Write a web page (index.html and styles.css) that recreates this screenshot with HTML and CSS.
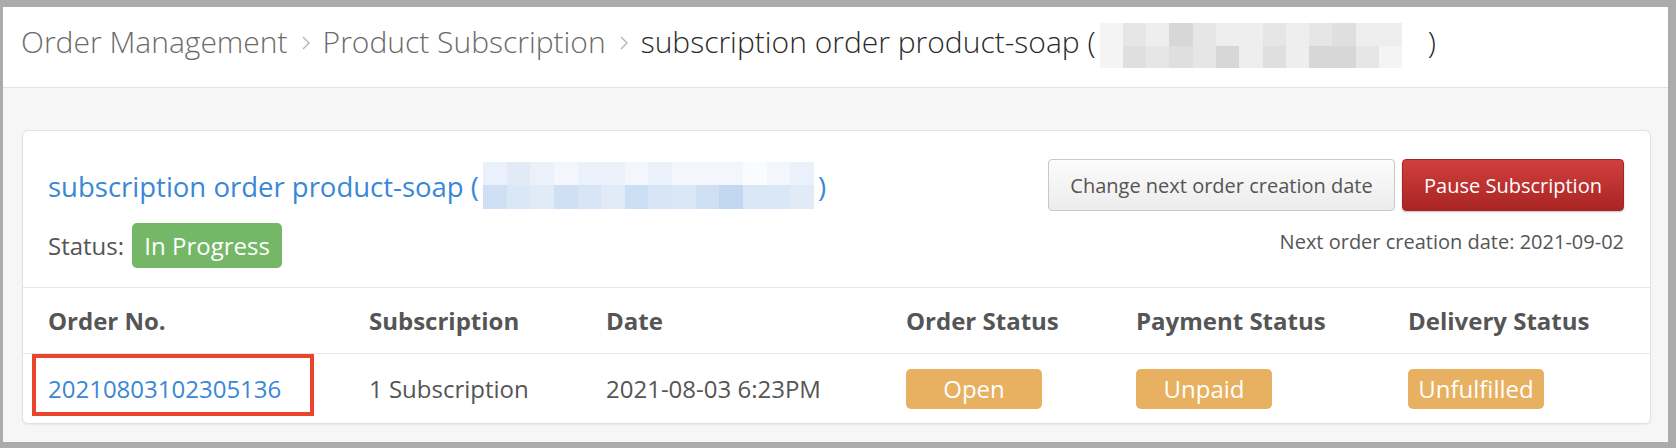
FILE: index.html
```html
<!DOCTYPE html>
<html lang="en">
<head>
<meta charset="utf-8">
<title>Subscription order</title>
<link rel="stylesheet" href="styles.css">
</head>
<body>
<div class="frame">
  <div class="page">
    <header class="topbar">
      <span class="crumb">Order Management</span>
      <svg class="chev" width="10" height="16" viewBox="0 0 10 16"><polyline points="2,2 8,8 2,14" fill="none" stroke="#aeb6c2" stroke-width="1.4"/></svg>
      <span class="crumb">Product Subscription</span>
      <svg class="chev" width="10" height="16" viewBox="0 0 10 16"><polyline points="2,2 8,8 2,14" fill="none" stroke="#aeb6c2" stroke-width="1.4"/></svg>
      <span class="crumb current">subscription order product-soap (</span>
      <span class="mosaic mosaic-gray">
        <i class="g1"></i><i class="g3"></i><i class="g2"></i><i class="g5"></i><i class="g3"></i><i class="g2"></i><i class="g2"></i><i class="g3"></i><i class="g2"></i><i class="g3"></i><i class="g4"></i><i class="g2"></i><i class="g2"></i><i class="g0"></i>
        <i class="g1"></i><i class="g4"></i><i class="g3"></i><i class="g4"></i><i class="g3"></i><i class="g5"></i><i class="g2"></i><i class="g4"></i><i class="g2"></i><i class="g5"></i><i class="g5"></i><i class="g3"></i><i class="g1"></i><i class="g0"></i>
      </span>
      <span class="crumb current">)</span>
    </header>

    <main class="content">
      <section class="card">
        <div class="card-head">
          <div class="head-left">
            <h1 class="title">
              <span>subscription order product-soap (</span>
              <span class="mosaic mosaic-blue">
                <i class="b2"></i><i class="b3"></i><i class="b2"></i><i class="b1"></i><i class="b2"></i><i class="b2"></i><i class="b1"></i><i class="b2"></i><i class="b1"></i><i class="b1"></i><i class="b1"></i><i class="b0"></i><i class="b1"></i><i class="b2"></i>
                <i class="b6"></i><i class="b4"></i><i class="b3"></i><i class="b6"></i><i class="b5"></i><i class="b3"></i><i class="b7"></i><i class="b5"></i><i class="b4"></i><i class="b6"></i><i class="b8"></i><i class="b4"></i><i class="b4"></i><i class="b3"></i>
              </span>
              <span>)</span>
            </h1>
            <div class="status-row">
              <span class="status-label">Status:</span>
              <span class="badge badge-green">In Progress</span>
            </div>
          </div>
          <div class="head-right">
            <div class="actions">
              <button class="btn btn-default">Change next order creation date</button>
              <button class="btn btn-danger">Pause Subscription</button>
            </div>
            <div class="next-date">Next order creation date: 2021-09-02</div>
          </div>
        </div>

        <div class="table">
          <div class="row thead">
            <div class="cell">Order No.</div>
            <div class="cell">Subscription</div>
            <div class="cell">Date</div>
            <div class="cell">Order Status</div>
            <div class="cell">Payment Status</div>
            <div class="cell">Delivery Status</div>
          </div>
          <div class="row tbody">
            <div class="cell order-cell">
              <a class="order-link" href="#">20210803102305136</a>
              <span class="highlight"></span>
            </div>
            <div class="cell">1 Subscription</div>
            <div class="cell">2021-08-03 6:23PM</div>
            <div class="cell"><span class="badge badge-orange">Open</span></div>
            <div class="cell"><span class="badge badge-orange">Unpaid</span></div>
            <div class="cell"><span class="badge badge-orange">Unfulfilled</span></div>
          </div>
        </div>
      </section>
    </main>
  </div>
</div>
</body>
</html>
```

FILE: styles.css
```css
* { box-sizing: border-box; }

html, body {
  margin: 0;
  padding: 0;
}

body {
  font-family: "Open Sans", "Noto Sans", "Liberation Sans", sans-serif;
  color: #555;
  background: #ababab;
}

.frame {
  width: 1676px;
  height: 448px;
  padding: 7px 8px 6px 3px;
  background: #ababab;
}

.page {
  height: 100%;
  background: #f6f6f6;
  display: flex;
  flex-direction: column;
}

/* ---------- top breadcrumb bar ---------- */
.topbar {
  height: 81px;
  flex: none;
  background: #fff;
  border-bottom: 1px solid #e3e3e3;
  display: flex;
  align-items: center;
  padding: 0 0 11px 18px;
  font-size: 30px;
  font-weight: 300;
  white-space: nowrap;
}

.crumb { color: #6b6b6b; }
.crumb.current { color: #2a2a2a; }

.chev {
  margin: 3px 12px 0 13px;
  flex: none;
}

.mosaic {
  display: inline-grid;
  grid-template-columns: repeat(14, 1fr);
  grid-template-rows: 1fr 1fr;
  flex: none;
}

.mosaic i { display: block; }

.mosaic-gray {
  width: 326px;
  height: 45px;
  margin: 8px 2px 0 4px;
}

.g0 { background: #ffffff; }
.g1 { background: #f4f4f4; }
.g2 { background: #eeeeee; }
.g3 { background: #e6e6e6; }
.g4 { background: #dfdfdf; }
.g5 { background: #d7d7d7; }

/* ---------- content ---------- */
.content {
  flex: 1;
  padding: 42px 17px 18px 19px;
}

.card {
  background: #fff;
  border: 1px solid #e1e1e1;
  border-radius: 6px;
  box-shadow: 0 1px 2px rgba(0, 0, 0, 0.06);
}

.card-head {
  display: flex;
  justify-content: space-between;
  padding: 28px 26px 19px 25px;
  border-bottom: 1px solid #e6e6e6;
}

.head-left {
  display: flex;
  flex-direction: column;
}

.title {
  margin: 0;
  height: 52px;
  padding-top: 3px;
  display: flex;
  align-items: center;
  font-size: 27.5px;
  font-weight: 400;
  color: #3a87d7;
  white-space: nowrap;
}

.mosaic-blue {
  width: 331px;
  height: 47px;
  margin: 0 4px 3px 4px;
}

.b0 { background: #f9fbfe; }
.b1 { background: #f3f7fd; }
.b2 { background: #eaf1fa; }
.b3 { background: #e1ebf8; }
.b4 { background: #dae7f7; }
.b5 { background: #d7e5f6; }
.b6 { background: #cfe0f4; }
.b7 { background: #cadef4; }
.b8 { background: #c2d7f0; }

.status-row {
  margin-top: 12px;
  display: flex;
  align-items: center;
  gap: 8px;
  font-size: 24px;
}

.status-label { color: #555; }

.badge {
  display: inline-flex;
  align-items: center;
  justify-content: center;
  color: #fff;
  border-radius: 5px;
  white-space: nowrap;
}

.badge-green {
  height: 45px;
  width: 150px;
  background: #74b767;
  font-size: 24px;
}

.head-right {
  display: flex;
  flex-direction: column;
  align-items: flex-end;
}

.actions {
  display: flex;
  gap: 7px;
}

.btn {
  height: 52px;
  font-family: inherit;
  font-size: 20px;
  border-radius: 4px;
  cursor: pointer;
  white-space: nowrap;
}

.btn-default {
  width: 347px;
  color: #555;
  background: linear-gradient(#fcfcfc, #ececec);
  border: 1px solid #c8c8c8;
}

.btn-danger {
  width: 222px;
  color: #fff;
  font-weight: 500;
  background: linear-gradient(#d03f3d, #a92524);
  border: 1px solid #a32422;
  box-shadow: 0 1px 2px rgba(0, 0, 0, 0.25);
}

.next-date {
  margin-top: 17px;
  font-size: 20px;
  line-height: 28px;
  color: #555;
  white-space: nowrap;
}

/* ---------- table ---------- */
.row {
  display: grid;
  grid-template-columns: 321px 237px 300px 230px 272px 1fr;
  align-items: center;
  padding-left: 25px;
  font-size: 24px;
  white-space: nowrap;
}

.thead {
  height: 66px;
  border-bottom: 1px solid #e6e6e6;
  font-weight: 700;
  color: #555;
}

.tbody {
  height: 69px;
  color: #555;
}

.order-cell {
  position: relative;
  align-self: stretch;
  display: flex;
  align-items: center;
}

.order-link {
  color: #3a87d7;
  text-decoration: none;
}

.highlight {
  position: absolute;
  left: -16px;
  top: 0;
  width: 282px;
  height: 62px;
  border: 4px solid #e8452c;
  pointer-events: none;
}

.badge-orange {
  width: 136px;
  height: 40px;
  background: #e8b061;
  font-size: 24px;
}
```
